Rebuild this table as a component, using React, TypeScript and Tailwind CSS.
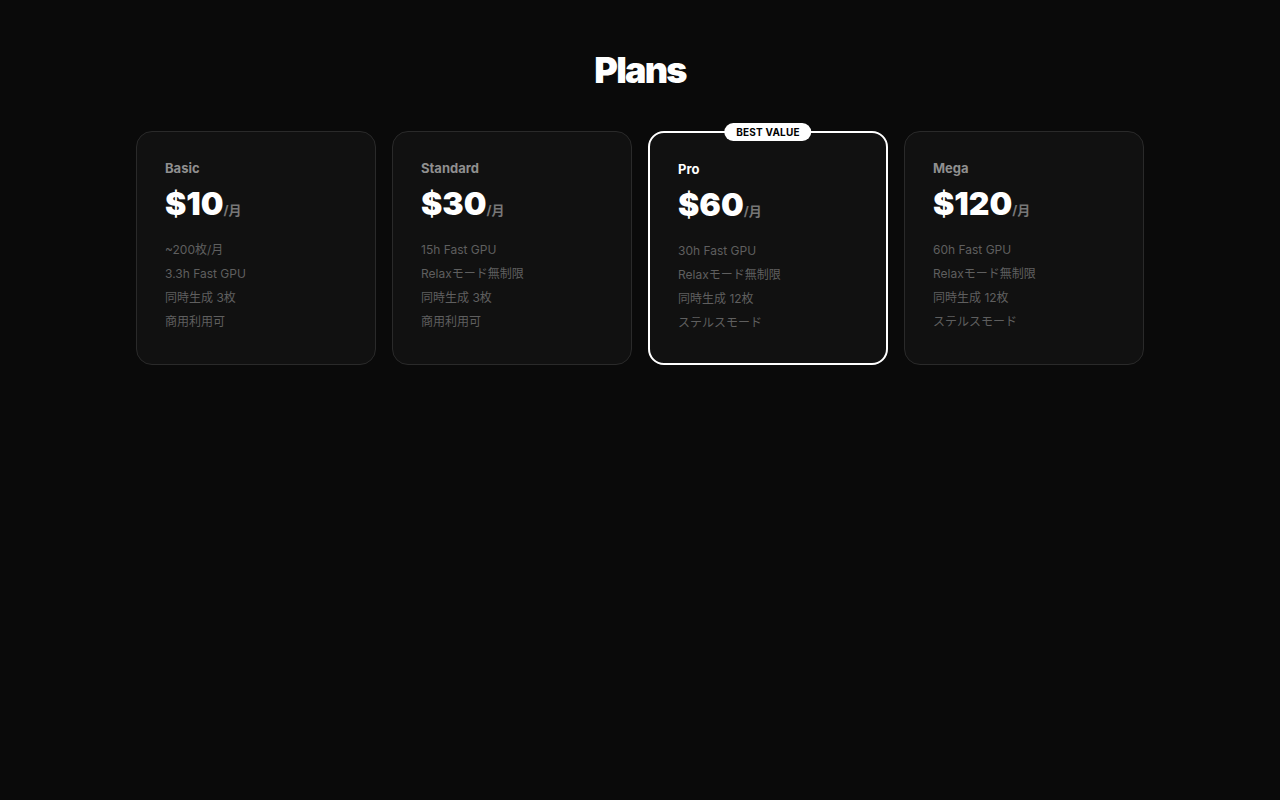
const PLANS = [
  { name: 'Basic', price: '$10', features: ['~200枚/月', '3.3h Fast GPU', '同時生成 3枚', '商用利用可'] },
  { name: 'Standard', price: '$30', features: ['15h Fast GPU', 'Relaxモード無制限', '同時生成 3枚', '商用利用可'] },
  { name: 'Pro', price: '$60', features: ['30h Fast GPU', 'Relaxモード無制限', '同時生成 12枚', 'ステルスモード'], best: true },
  { name: 'Mega', price: '$120', features: ['60h Fast GPU', 'Relaxモード無制限', '同時生成 12枚', 'ステルスモード'] },
];

export default function App() {
  return (
    <div
      className="min-h-screen bg-[#0a0a0a] text-white"
      style={{ fontFamily: 'Inter, "Noto Sans CJK JP", sans-serif' }}
    >
      <div className="pt-[48px]">
        <h1 className="text-center text-[36px] leading-[44px] font-black tracking-[-0.05em]">Plans</h1>

        <div className="mt-[39px] mx-auto w-[1008px] grid grid-cols-4 gap-4">
          {PLANS.map(plan => (
            <div
              key={plan.name}
              className={
                plan.best
                  ? 'relative h-[234px] rounded-[16px] border-2 border-white bg-[#111111] px-[28px] pt-[26px]'
                  : 'relative h-[234px] rounded-[16px] border border-[#2a2a2a] bg-[#111111] px-[28px] pt-[26px]'
              }
            >
              {plan.best && (
                <div className="absolute left-1/2 -translate-x-1/2 -top-[10px] h-[18px] px-3 rounded-full bg-white text-black text-[10px] font-bold tracking-[0.02em] flex items-center">
                  BEST VALUE
                </div>
              )}
              <div className={plan.best ? 'text-[13px] leading-5 font-bold text-white' : 'text-[13px] leading-5 font-bold text-[#8f8f8f]'}>
                {plan.name}
              </div>
              <div className="mt-[6px] flex items-baseline leading-[40px]">
                <span className="text-[32px] font-black">{plan.price}</span>
                <span className="text-[13px] font-bold text-[#777777]">/月</span>
              </div>
              <ul className="mt-[8px]">
                {plan.features.map(f => (
                  <li key={f} className="text-[12px] leading-[24px] text-[#5f5f5f]">{f}</li>
                ))}
              </ul>
            </div>
          ))}
        </div>
      </div>
    </div>
  );
}
